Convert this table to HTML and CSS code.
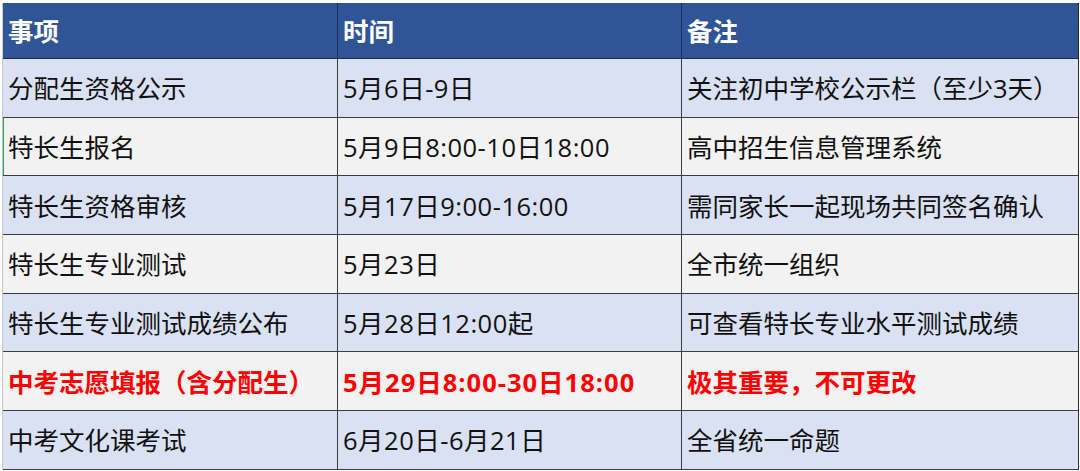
FILE: index.html
```html
<!DOCTYPE html>
<html lang="zh">
<head>
<meta charset="utf-8">
<link rel="stylesheet" href="styles.css">
</head>
<body>
<div class="sheet">
  <div class="grid">
    <div class="cell head">事项</div>
    <div class="cell head">时间</div>
    <div class="cell head last">备注</div>

    <div class="cell blue">分配生资格公示</div>
    <div class="cell blue time">5月6日-9日</div>
    <div class="cell blue last">关注初中学校公示栏（至少3天）</div>

    <div class="cell grey sel">特长生报名</div>
    <div class="cell grey time">5月9日8:00-10日18:00</div>
    <div class="cell grey last">高中招生信息管理系统</div>

    <div class="cell blue">特长生资格审核</div>
    <div class="cell blue time">5月17日9:00-16:00</div>
    <div class="cell blue last">需同家长一起现场共同签名确认</div>

    <div class="cell grey">特长生专业测试</div>
    <div class="cell grey time">5月23日</div>
    <div class="cell grey last">全市统一组织</div>

    <div class="cell blue">特长生专业测试成绩公布</div>
    <div class="cell blue time">5月28日12:00起</div>
    <div class="cell blue last">可查看特长专业水平测试成绩</div>

    <div class="cell grey red">中考志愿填报（含分配生）</div>
    <div class="cell grey red time">5月29日8:00-30日18:00</div>
    <div class="cell grey red last">极其重要，不可更改</div>

    <div class="cell blue">中考文化课考试</div>
    <div class="cell blue time">6月20日-6月21日</div>
    <div class="cell blue last">全省统一命题</div>
  </div>
</div>
</body>
</html>
```

FILE: styles.css
```css
html, body {
  margin: 0;
  padding: 0;
  background: #ffffff;
}

.sheet {
  width: 1080px;
  height: 471px;
  padding: 3px 0 0 2px;
  box-sizing: border-box;
  font-family: "Open Sans", "Noto Sans CJK SC", sans-serif;
}

.grid {
  display: grid;
  grid-template-columns: 335px 344px 397px;
  grid-template-rows: 56px repeat(7, 58.7px);
  border-left: 1px solid #c8c8c8;
  width: 1077px;
  box-sizing: border-box;
}

.cell {
  display: flex;
  align-items: center;
  padding: 0 0 2px 5px;
  font-size: 25.5px;
  color: #111111;
  border-right: 1px solid #3c3c3c;
  border-bottom: 1px solid #3c3c3c;
  white-space: nowrap;
  letter-spacing: 0;
}

.cell.time {
  letter-spacing: 0.5px;
}

.cell.red.time {
  letter-spacing: 1px;
}

.cell.last {
  border-right: 1.5px solid #2a2a2a;
}

.head {
  background: #2f5597;
  color: #ffffff;
  font-weight: 700;
  border-right-color: #1f2f55;
  border-bottom-color: #2a2a2a;
}

.blue {
  background: #d9e1f2;
}

.grey {
  background: #f2f2f2;
}

.red {
  color: #ff0000;
  font-weight: 700;
}

.sel {
  box-shadow: inset 1px 0 0 #21a366;
}
```
